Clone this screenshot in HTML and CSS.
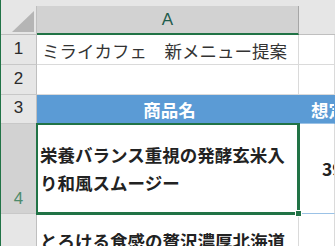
FILE: index.html
```html
<!DOCTYPE html>
<html lang="ja">
<head>
<meta charset="utf-8">
<link rel="stylesheet" href="styles.css">
</head>
<body>
<div class="app">
  <div class="strip"></div>
  <div class="sheet">
    <div class="corner"><div class="tri"></div></div>
    <div class="colhead sel">A</div>
    <div class="colhead"></div>

    <div class="rowhead">1</div>
    <div class="cell title">ミライカフェ　新メニュー提案</div>
    <div class="cell"></div>

    <div class="rowhead">2</div>
    <div class="cell"></div>
    <div class="cell"></div>

    <div class="rowhead">3</div>
    <div class="cell hdr center">商品名</div>
    <div class="cell hdr hdr-b">想定価格</div>

    <div class="rowhead selrow">4</div>
    <div class="cell active bold wrap">栄養バランス重視の発酵玄米入り和風スムージー</div>
    <div class="cell bold price blue-bottom">390円</div>

    <div class="rowhead"></div>
    <div class="cell bold wrap top">とろける食感の贅沢濃厚北海道</div>
    <div class="cell"></div>
  </div>
</div>
</body>
</html>
```

FILE: styles.css
```css
html, body {
  margin: 0;
  padding: 0;
  background: #ffffff;
}
body {
  width: 335px;
  height: 246px;
  overflow: hidden;
}
.app {
  height: 246px;
  border-left: 1px solid #217346;
  display: flex;
  flex-direction: column;
}
.strip {
  height: 6px;
  background: #e6e6e6;
  flex: none;
}
.sheet {
  flex: 1;
  display: grid;
  grid-template-columns: 36px 262px 1fr;
  grid-template-rows: 29px 30px 30px 29px 90px 1fr;
  font-family: "Noto Sans CJK JP", "Noto Sans", sans-serif;
}
.sheet > div {
  box-sizing: border-box;
  min-width: 0;
  overflow: hidden;
}
.corner {
  background: #e6e6e6;
  border-right: 1px solid #bfbfbf;
  border-bottom: 1px solid #bfbfbf;
  position: relative;
}
.tri {
  position: absolute;
  right: 2px;
  bottom: 2px;
  width: 22px;
  height: 21px;
  background: #b5b5b5;
  clip-path: polygon(100% 0, 100% 100%, 0 100%);
}
.colhead {
  background: #e6e6e6;
  border-bottom: 1px solid #bfbfbf;
  display: flex;
  align-items: center;
  justify-content: center;
  font-family: "Liberation Sans", "Noto Sans", sans-serif;
  font-size: 17px;
  color: #444;
}
.colhead.sel {
  background: #d2d2d2;
  border-right: 1px solid #a6a6a6;
  border-bottom: 2px solid #217346;
  color: #1f5c4c;
  padding-top: 1px;
}
.rowhead {
  background: #e6e6e6;
  border-right: 1px solid #bfbfbf;
  border-bottom: 1px solid #c8c8c8;
  display: flex;
  align-items: flex-end;
  justify-content: center;
  padding-bottom: 5px;
  font-family: "Liberation Sans", "Noto Sans", sans-serif;
  font-size: 17px;
  color: #2b2b2b;
}
.rowhead.selrow {
  background: #d2d2d2;
  color: #4d8a6b;
  padding-bottom: 4px;
}
.cell {
  border-right: 1px solid #dadada;
  border-bottom: 1px solid #dadada;
  font-size: 17.5px;
  color: #222;
  padding-left: 4px;
  display: flex;
  align-items: center;
  white-space: nowrap;
}
.title {
  color: #333;
  padding-left: 5px;
  padding-top: 1px;
}
.hdr {
  background: #5b9bd5;
  border-right-color: #5b9bd5;
  border-bottom: 1px solid #9bc2e6;
  color: #ffffff;
  font-weight: bold;
}
.center {
  justify-content: center;
}
.hdr-b {
  padding-left: 12px;
}
.bold {
  font-weight: bold;
}
.wrap {
  white-space: normal;
  line-height: 28px;
  padding-left: 3px;
  padding-right: 2px;
}
.top {
  align-items: flex-start;
  padding-top: 13px;
}
.price {
  padding-left: 23px;
}
.blue-bottom {
  border-bottom-color: #9bc2e6;
}
.active {
  position: relative;
  overflow: visible !important;
  z-index: 2;
  box-shadow: 0 0 0 1px #217346, inset 0 0 0 1px #217346;
  border-right-color: #217346;
  border-bottom-color: #217346;
}
.active::after {
  content: "";
  position: absolute;
  right: -4px;
  bottom: -4px;
  width: 5px;
  height: 5px;
  background: #217346;
  border: 1px solid #ffffff;
}
```
